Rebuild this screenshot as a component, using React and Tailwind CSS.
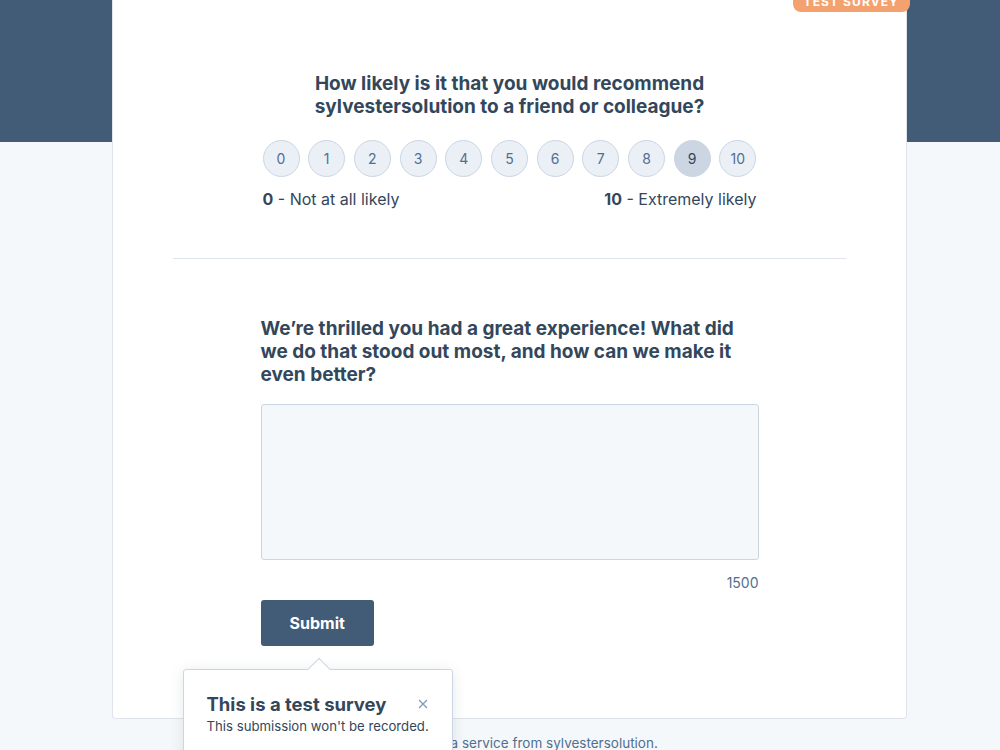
import React from "react";

const font = { fontFamily: '"Inter", "Noto Sans", sans-serif' };

function Scale() {
  const values = [0, 1, 2, 3, 4, 5, 6, 7, 8, 9, 10];
  return (
    <div className="mx-auto w-[494px]">
      <div className="flex justify-between">
        {values.map((v) => (
          <button
            key={v}
            className={
              v === 9
                ? "flex h-[37px] w-[37px] items-center justify-center rounded-full border border-[#cbd6e2] bg-[#cbd6e2] text-[14px] text-[#33475b]"
                : "flex h-[37px] w-[37px] items-center justify-center rounded-full border border-[#cbd6e2] bg-[#eaf0f6] text-[14px] text-[#516f90]"
            }
          >
            {v}
          </button>
        ))}
      </div>
      <div className="mt-[10px] flex justify-between text-[16px] leading-[24px] text-[#33475b]">
        <span>
          <b className="font-bold">0</b> - Not at all likely
        </span>
        <span>
          <b className="font-bold">10</b> - Extremely likely
        </span>
      </div>
    </div>
  );
}

export default function App() {
  return (
    <div
      style={font}
      className="relative min-h-[750px] overflow-hidden bg-[linear-gradient(#425b76_0,#425b76_142px,#f5f8fa_142px)] text-[#33475b]"
    >
      <div className="relative ml-[112px] w-[795px] rounded-b-[4px] border-x border-b border-[#dfe3eb] bg-white px-[60px] pb-[72px] pt-[72px]">
        <span className="absolute right-[-4px] top-[-8px] rounded-[8px] bg-[#f4a170] pb-[4px] pl-[11px] pr-[11px] pt-[4px] text-[12px] font-bold uppercase leading-[12px] tracking-[1.1px] text-white">
          Test survey
        </span>

        <h2 className="mx-auto text-center text-[19px] font-bold leading-[23px]">
          How likely is it that you would recommend
          <br />
          sylvestersolution to a friend or colleague?
        </h2>

        <div className="mt-[22px]">
          <Scale />
        </div>

        <div className="mt-[47px] h-px bg-[#dfe3eb]" />

        <div className="mx-auto mt-[58px] w-[498px]">
          <h2 className="text-[19px] font-bold leading-[23px]">
            We’re thrilled you had a great experience! What did we do that
            stood out most, and how can we make it even better?
          </h2>
          <textarea className="mt-[18px] block h-[156px] w-full resize-none rounded-[3px] border border-[#cbd6e2] bg-[#f5f8fa] outline-none" />
          <div className="mt-[13px] text-right text-[14px] leading-[20px] text-[#516f90]">
            1500
          </div>
          <div className="relative mt-[7px] w-fit">
            <button className="h-[46px] rounded-[3px] bg-[#425b76] px-[29px] text-[16px] font-bold text-white">
              Submit
            </button>

            <div className="absolute left-[-78px] top-[69px] z-10 w-[270px] rounded-[3px] border border-[#cbd6e2] bg-white pb-[40px] pl-[23px] pr-[18px] pt-[22px] shadow-[0_2px_14px_rgba(45,62,80,0.12)]">
              <span className="absolute left-[127px] top-[-9px] h-[16px] w-[16px] rotate-45 border-l border-t border-[#cbd6e2] bg-white" />
              <div className="flex items-start justify-between">
                <div className="text-[18.5px] font-bold leading-[24px]">
                  This is a test survey
                </div>
                <svg
                  width="10"
                  height="10"
                  viewBox="0 0 10 10"
                  className="mr-[6px] mt-[7px]"
                  stroke="#7c98b6"
                  strokeWidth="1.2"
                >
                  <path d="M1 1 L9 9 M9 1 L1 9" />
                </svg>
              </div>
              <div className="whitespace-nowrap text-[13.2px] leading-[20px] text-[#33475b]">
                This submission won't be recorded.
              </div>
            </div>
          </div>
        </div>
      </div>
      <p className="mt-[14px] pr-[8px] text-center text-[13.5px] leading-[20px] text-[#516f90]">
        Feedback survey, a service from sylvestersolution.
      </p>
    </div>
  );
}
